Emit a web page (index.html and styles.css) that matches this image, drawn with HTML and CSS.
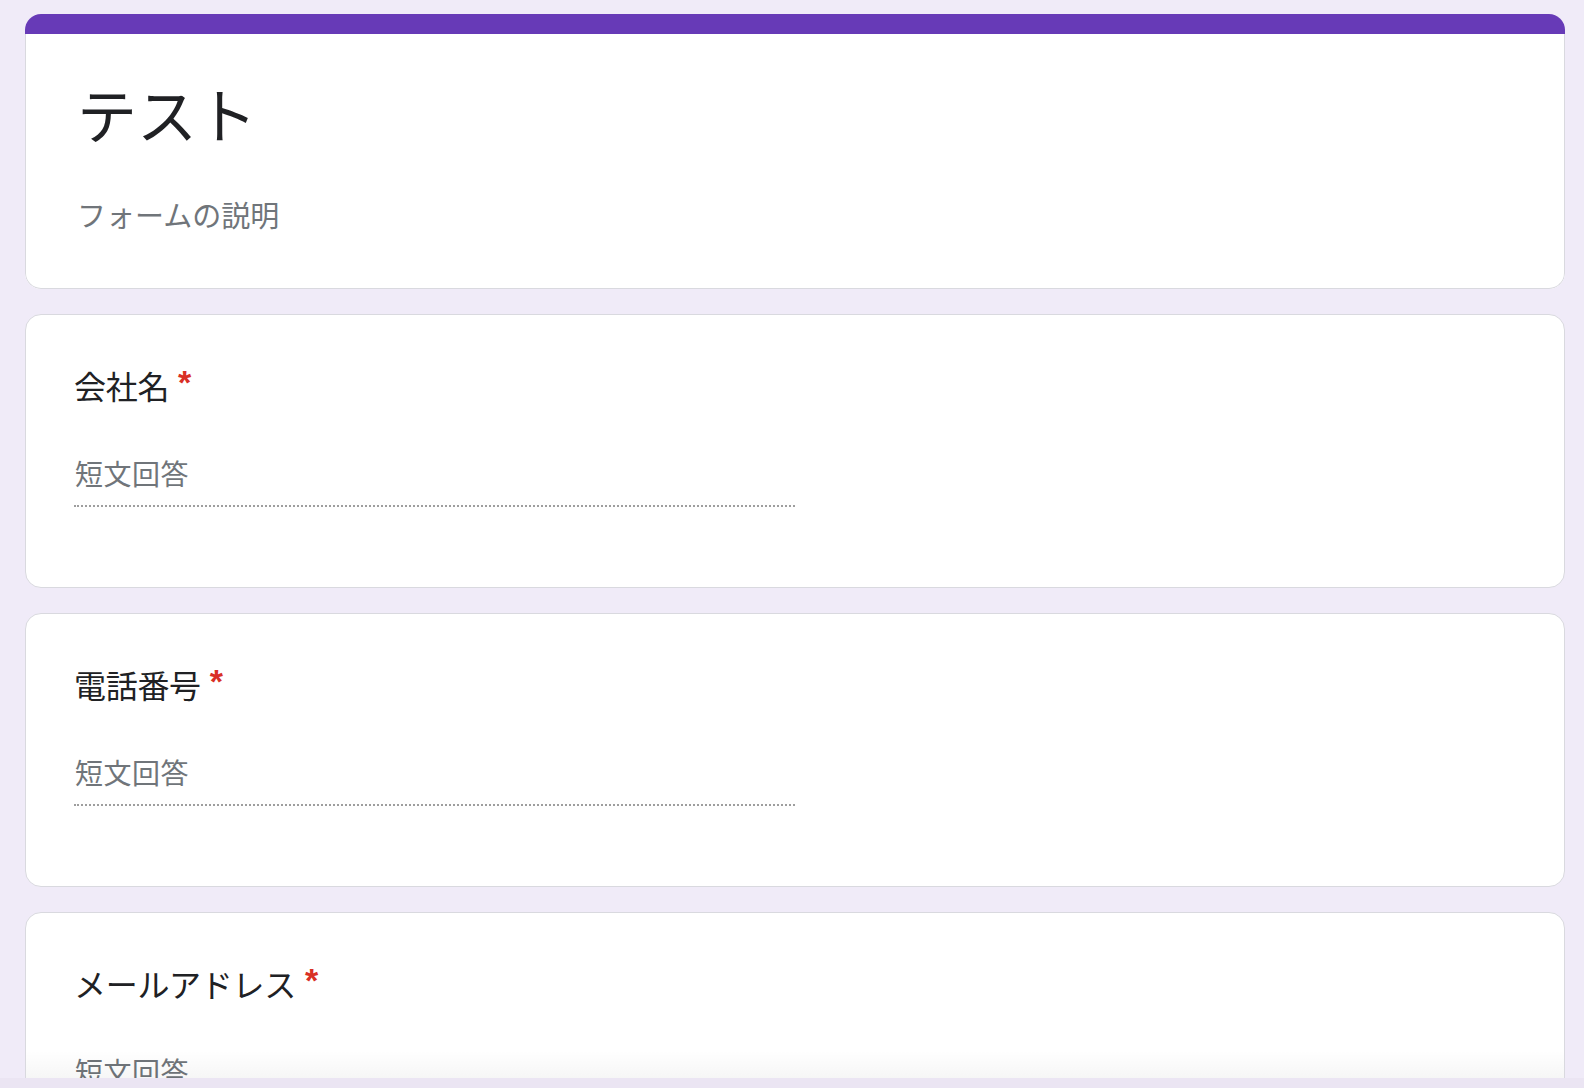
FILE: index.html
```html
<!DOCTYPE html>
<html lang="ja">
<head>
<meta charset="utf-8">
<title>テスト</title>
<link rel="stylesheet" href="styles.css">
</head>
<body>
<div class="viewport">
  <div class="form">
    <div class="card header-card">
      <div class="band"></div>
      <div class="header-body">
        <div class="form-title">テスト</div>
        <div class="form-desc">フォームの説明</div>
      </div>
    </div>
    <div class="card q-card">
      <div class="q-title">会社名<span class="req">*</span></div>
      <div class="answer"><span class="placeholder">短文回答</span></div>
    </div>
    <div class="card q-card">
      <div class="q-title">電話番号<span class="req">*</span></div>
      <div class="answer"><span class="placeholder">短文回答</span></div>
    </div>
    <div class="card q-card">
      <div class="q-title">メールアドレス<span class="req">*</span></div>
      <div class="answer"><span class="placeholder">短文回答</span></div>
    </div>
  </div>
  <div class="fade"></div>
</div>
<div class="strip"></div>
</body>
</html>
```
FILE: styles.css
```css
html, body {
  margin: 0;
  padding: 0;
}
body {
  background: #f0ebf8;
  font-family: "Noto Sans CJK JP", "Noto Sans", sans-serif;
  color: #202124;
  width: 1584px;
  height: 1088px;
  overflow: hidden;
}
.viewport {
  position: relative;
  height: 1078px;
  overflow: hidden;
}
.form {
  padding: 14px 19px 0 25px;
  display: flex;
  flex-direction: column;
  gap: 25px;
}
.card {
  background: #fff;
  border: 1.5px solid #d9d9df;
  border-radius: 16px;
  box-sizing: border-box;
}
.header-card {
  border: none;
  overflow: hidden;
  height: 275px;
  display: flex;
  flex-direction: column;
}
.band {
  height: 20px;
  background: #673ab7;
  flex: none;
}
.header-body {
  flex: 1;
  border: 1.5px solid #d9d9df;
  border-top: none;
  border-radius: 0 0 16px 16px;
  padding: 39px 48px 0 51px;
}
.form-title {
  font-size: 60px;
  line-height: 80px;
  color: #202124;
}
.form-desc {
  margin-top: 41px;
  font-size: 29px;
  line-height: 40px;
  color: #70757a;
}
.q-card {
  height: 274px;
  padding: 46px 48px 0 48px;
  flex: none;
}
.q-title {
  font-size: 32px;
  line-height: 48px;
  color: #202124;
  letter-spacing: -0.3px;
}
.req {
  color: #d93025;
  font-family: "Liberation Sans", Arial, sans-serif;
  font-weight: bold;
  padding-left: 9px;
  font-size: 34px;
  vertical-align: top;
  position: relative;
  top: -3px;
}
.answer {
  margin-top: 44px;
  width: 50%;
  padding-bottom: 12px;
  border-bottom: 2px dotted #9e9e9e;
}
.placeholder {
  display: block;
  font-size: 28px;
  line-height: 40px;
  color: #70757a;
  padding-left: 1px;
  letter-spacing: 0.5px;
}
.fade {
  position: absolute;
  left: 26px;
  right: 20px;
  bottom: 0;
  height: 28px;
  background: linear-gradient(to bottom, rgba(0,0,0,0), rgba(0,0,0,0.035));
}
.strip {
  height: 10px;
  background: #ebe5f3;
}
```
